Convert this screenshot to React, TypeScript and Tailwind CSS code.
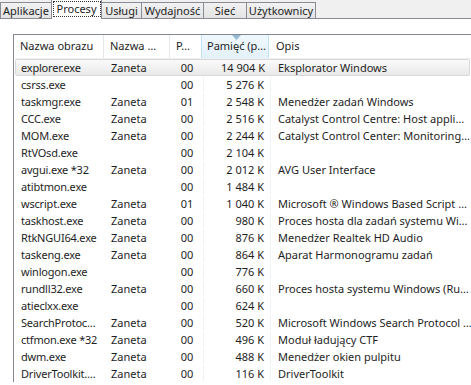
import React from "react";

type Row = { name: string; user: string; cpu: string; mem: string; desc: string };

const rows: Row[] = [
  { name: "explorer.exe", user: "Zaneta", cpu: "00", mem: "14 904 K", desc: "Eksplorator Windows" },
  { name: "csrss.exe", user: "", cpu: "00", mem: "5 276 K", desc: "" },
  { name: "taskmgr.exe", user: "Zaneta", cpu: "01", mem: "2 548 K", desc: "Menedżer zadań Windows" },
  { name: "CCC.exe", user: "Zaneta", cpu: "00", mem: "2 516 K", desc: "Catalyst Control Centre: Host appli…" },
  { name: "MOM.exe", user: "Zaneta", cpu: "00", mem: "2 244 K", desc: "Catalyst Control Center: Monitoring…" },
  { name: "RtVOsd.exe", user: "", cpu: "00", mem: "2 104 K", desc: "" },
  { name: "avgui.exe *32", user: "Zaneta", cpu: "00", mem: "2 012 K", desc: "AVG User Interface" },
  { name: "atibtmon.exe", user: "", cpu: "00", mem: "1 484 K", desc: "" },
  { name: "wscript.exe", user: "Zaneta", cpu: "01", mem: "1 040 K", desc: "Microsoft ® Windows Based Script …" },
  { name: "taskhost.exe", user: "Zaneta", cpu: "00", mem: "980 K", desc: "Proces hosta dla zadań systemu Wi…" },
  { name: "RtkNGUI64.exe", user: "Zaneta", cpu: "00", mem: "876 K", desc: "Menedżer Realtek HD Audio" },
  { name: "taskeng.exe", user: "Zaneta", cpu: "00", mem: "864 K", desc: "Aparat Harmonogramu zadań" },
  { name: "winlogon.exe", user: "", cpu: "00", mem: "776 K", desc: "" },
  { name: "rundll32.exe", user: "Zaneta", cpu: "00", mem: "660 K", desc: "Proces hosta systemu Windows (Ru…" },
  { name: "atieclxx.exe", user: "", cpu: "00", mem: "624 K", desc: "" },
  { name: "SearchProtoc…", user: "Zaneta", cpu: "00", mem: "520 K", desc: "Microsoft Windows Search Protocol …" },
  { name: "ctfmon.exe *32", user: "Zaneta", cpu: "00", mem: "496 K", desc: "Moduł ładujący CTF" },
  { name: "dwm.exe", user: "Zaneta", cpu: "00", mem: "488 K", desc: "Menedżer okien pulpitu" },
  { name: "DriverToolkit.…", user: "Zaneta", cpu: "00", mem: "116 K", desc: "DriverToolkit" },
];

const tabs = [
  { label: "Aplikacje", w: "w-[52px]" },
  { label: "Procesy", w: "w-[51px]" },
  { label: "Usługi", w: "w-[41px]" },
  { label: "Wydajność", w: "w-[63px]" },
  { label: "Sieć", w: "w-[44px]" },
  { label: "Użytkownicy", w: "w-[70px]" },
];

const App: React.FC = () => {
  return (
    <div
      className="w-[471px] h-[385px] overflow-hidden bg-white text-[11px] text-[#1e1e1e]"
      style={{ fontFamily: '"Noto Sans", sans-serif' }}
    >
      {/* tab strip */}
      <div className="flex items-end h-[19px] bg-[#f0f0f0] border-b border-[#898c95]">
        {tabs.map((t, i) =>
          i === 1 ? (
            <div
              key={t.label}
              className={t.w + " shrink-0 h-[20px] -mb-px -ml-px flex justify-center items-start pt-[1px] bg-white border border-b-0 border-[#898c95] z-10"}
            >
              <span className="leading-[14px] px-[3px] border border-dotted border-[#333]">{t.label}</span>
            </div>
          ) : (
            <div
              key={t.label}
              className={t.w + " shrink-0 h-[16px] flex justify-center items-center bg-gradient-to-b from-[#f2f2f2] to-[#e3e3e3] border border-b-0 border-[#898c95] -ml-px first:ml-0 leading-none"}
            >
              {t.label}
            </div>
          )
        )}
      </div>

      {/* list view */}
      <div className="ml-[13px] mt-[15px] border-l border-t border-[#828790]">
        <div className="flex h-[24px] border-b border-[#eef0f3] text-[#1e1e1e] whitespace-nowrap">
          <div className="w-[90px] shrink-0 flex items-center pl-[6px] border-r border-[#e3e6ea]">Nazwa obrazu</div>
          <div className="w-[66px] shrink-0 flex items-center pl-[6px] border-r border-[#e3e6ea]">Nazwa …</div>
          <div className="w-[32px] shrink-0 flex items-center pl-[6px] border-r border-[#e3e6ea]">P…</div>
          <div className="relative w-[68px] shrink-0 flex items-center pl-[5px] bg-gradient-to-b from-[#f0f8fd] to-[#e3f1fa] border-l border-r border-[#bfe2f6] -ml-px">
            <svg className="absolute left-[30px] top-0" width="9" height="5" viewBox="0 0 9 5">
              <polygon points="0,0 9,0 4.5,5" fill="#97b9d8" />
            </svg>
            Pamięć (p…
          </div>
          <div className="flex-1 flex items-center pl-[7px]">Opis</div>
        </div>
        <div className="flex flex-col">
          {rows.map((r, i) => (
            <div
              key={r.name}
              className={
                "flex h-[17px] items-center leading-[15px] whitespace-nowrap " +
                (i === 0
                  ? "mx-px rounded-[2px] border border-[#d9d9d9] bg-gradient-to-b from-[#fafafa] to-[#e9e9e9]"
                  : "border border-transparent mx-px")
              }
            >
              <div className="w-[89px] shrink-0 pl-[5px] overflow-hidden tracking-[-0.2px]">{r.name}</div>
              <div className="w-[66px] shrink-0 pl-[6px]">{r.user}</div>
              <div className="w-[32px] shrink-0 text-center">{r.cpu}</div>
              <div
                className={
                  "w-[68px] shrink-0 h-full flex items-center justify-end pr-[6px] " +
                  (i === 0 ? "" : "border-l border-r border-[#eef3f8]")
                }
              >
                {r.mem}
              </div>
              <div className="flex-1 pl-[7px]">{r.desc}</div>
            </div>
          ))}
        </div>
      </div>
    </div>
  );
};

export default App;
